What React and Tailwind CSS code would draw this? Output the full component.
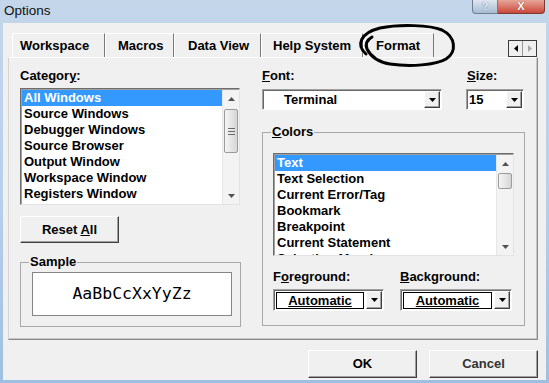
import React from 'react';

const sans = "font-['Liberation_Sans',Arial,sans-serif]";

function Down({ color = '#000' }) {
  return (
    <svg width="7" height="4" viewBox="0 0 7 4">
      <path d="M0 0h7L3.5 4z" fill={color} />
    </svg>
  );
}

function Up({ color = '#000' }) {
  return (
    <svg width="7" height="4" viewBox="0 0 7 4">
      <path d="M0 4h7L3.5 0z" fill={color} />
    </svg>
  );
}

function Raised({ className = '', children }) {
  return (
    <div className={`bg-[#f0f0f0] border border-t-white border-l-white border-r-[#404040] border-b-[#404040] shadow-[inset_-1px_-1px_0_#a0a0a0] flex items-center justify-center ${className}`}>
      {children}
    </div>
  );
}

function ScrollBar({ thumbTop, thumbHeight, grip }) {
  return (
    <div className="w-[17px] h-full bg-[#f3f3f3] border-l border-[#e6e6e6] flex flex-col">
      <div className="h-[17px] flex items-center justify-center">
        <Up color="#505050" />
      </div>
      <div className="flex-1 relative">
        <div
          className="absolute left-[1px] right-[1px] rounded-[2px] border border-[#9b9b9b] bg-gradient-to-r from-[#f5f5f5] to-[#d6d6d6] flex flex-col items-center justify-center gap-[2px]"
          style={{ top: thumbTop, height: thumbHeight }}
        >
          {grip && (
            <>
              <div className="w-[7px] h-[1px] bg-[#6a6a6a]" />
              <div className="w-[7px] h-[1px] bg-[#6a6a6a]" />
              <div className="w-[7px] h-[1px] bg-[#6a6a6a]" />
            </>
          )}
        </div>
      </div>
      <div className="h-[17px] flex items-center justify-center">
        <Down color="#505050" />
      </div>
    </div>
  );
}

function ListBox({ items, className, thumbTop, thumbHeight, grip }) {
  return (
    <div className={`bg-white border border-t-[#6d6d6d] border-l-[#6d6d6d] border-r-[#e3e3e3] border-b-[#e3e3e3] shadow-[inset_1px_1px_0_#a0a0a0] flex overflow-hidden ${className}`}>
      <div className="flex-1 pt-[1px] pl-[1px]">
        {items.map((it, i) => (
          <div
            key={it}
            className={`h-[16px] leading-[16px] pl-[2px] whitespace-nowrap text-[13px] font-bold ${i === 0 ? 'bg-[#3399ff] text-white' : 'text-black'}`}
          >
            {it}
          </div>
        ))}
      </div>
      <div className="pt-[1px] h-full">
        <ScrollBar thumbTop={thumbTop} thumbHeight={thumbHeight} grip={grip} />
      </div>
    </div>
  );
}

function Combo({ className, children }) {
  return (
    <div className={`h-[21px] bg-white border border-t-[#a0a0a0] border-l-[#a0a0a0] border-r-white border-b-white shadow-[inset_1px_1px_0_#696969] flex items-center pr-[1px] ${className}`}>
      <div className="flex-1 text-[13px] font-bold leading-[16px]">{children}</div>
      <Raised className="w-[16px] h-[17px]">
        <Down />
      </Raised>
    </div>
  );
}

function ColorCombo({ className }) {
  return (
    <div className={`h-[22px] bg-white border border-t-[#a0a0a0] border-l-[#a0a0a0] border-r-white border-b-white shadow-[inset_1px_1px_0_#696969] flex items-center pl-[2px] pr-[1px] gap-[2px] ${className}`}>
      <div className="flex-1 h-[17px] border border-black flex items-center justify-center text-[13px] font-bold underline leading-[15px]">
        Automatic
      </div>
      <Raised className="w-[16px] h-[18px]">
        <Down />
      </Raised>
    </div>
  );
}

export default function App() {
  const tabs = [
    { label: 'Workspace', w: 'w-[93px] pl-[7px]' },
    { label: 'Macros', w: 'w-[69px] pl-[12px]' },
    { label: 'Data View', w: 'w-[87px] pl-[13px]' },
    { label: 'Help System', w: 'w-[102px] pl-[11px]' },
    { label: 'Format', w: 'w-[71px] pl-[12px]' },
  ];

  const categories = [
    'All Windows',
    'Source Windows',
    'Debugger Windows',
    'Source Browser',
    'Output Window',
    'Workspace Window',
    'Registers Window',
  ];

  const colors = [
    'Text',
    'Text Selection',
    'Current Error/Tag',
    'Bookmark',
    'Breakpoint',
    'Current Statement',
    'Selection Margin',
  ];

  return (
    <div className={`relative w-[549px] h-[383px] overflow-hidden bg-gradient-to-b from-[#c3d6ea] via-[#b8d0ea] to-[#9fbfe2] ${sans}`}>
      {/* title bar */}
      <div className="h-[23px] flex items-start justify-between pl-[4px] pr-[4px]">
        <span className="text-[13.5px] leading-[18px] mt-[2px] text-[#111]">Options</span>
        <div className="flex h-[14px]">
          <div className="w-[26px] h-full rounded-bl-[4px] border border-t-0 border-[#6e7f95] bg-gradient-to-b from-[#dfe7f1] to-[#a9bbd1] flex items-center justify-center text-[11px] font-bold leading-none text-[#f4f7fb] [text-shadow:0_0_1px_#33475e]">
            ?
          </div>
          <div className="w-[47px] h-full rounded-br-[4px] border border-t-0 border-l-0 border-[#7a3a32] bg-gradient-to-b from-[#e6a597] to-[#c8453a] flex items-center justify-center text-[11px] font-bold leading-none text-white [text-shadow:0_0_1px_#5a1a14]">
            X
          </div>
        </div>
      </div>

      {/* client area */}
      <div className="mx-[3px] h-[357px] bg-[#f0f0f0] flex flex-col">
        {/* tab strip */}
        <div className="mt-[10px] ml-[5px] w-[530px] h-[24px] flex">
          <div className="ml-[4px] flex h-full">
            {tabs.map((t) => (
              <div
                key={t.label}
                className={`h-full flex items-center border-t border-l border-t-white border-l-white border-r border-r-[#7a7a7a] text-[13px] font-bold text-black ${t.w}`}
              >
                {t.label}
              </div>
            ))}
          </div>
          <div className="ml-auto self-end mr-[1px] h-[17px] w-[29px] flex border border-[#3c3c3c] bg-[#f0f0f0]">
            <div className="flex-1 flex items-center justify-center border-r border-[#9a9a9a]">
              <svg width="4" height="7" viewBox="0 0 4 7">
                <path d="M4 0v7L0 3.5z" fill="#000" />
              </svg>
            </div>
            <div className="flex-1 flex items-center justify-center">
              <svg width="4" height="7" viewBox="0 0 4 7">
                <path d="M0 0v7L4 3.5z" fill="#a8a8a8" />
              </svg>
            </div>
          </div>
        </div>

        {/* tab panel */}
        <div className="ml-[5px] w-[530px] h-[283px] border border-t-white border-l-[#d4d4d4] border-r-[#8a8a8a] border-b-[#8a8a8a] shadow-[inset_-1px_-1px_0_#c8c8c8] flex pl-[11px] pt-[10px]">
          {/* left column */}
          <div className="w-[221px] flex flex-col">
            <div className="h-[16px] leading-[16px] text-[13px] font-bold">
              Categor<u>y</u>:
            </div>
            <ListBox
              items={categories}
              className="mt-[4px] w-[220px] h-[117px]"
              thumbTop={2}
              thumbHeight={44}
              grip
            />
            <Raised className="mt-[11px] w-[99px] h-[27px] text-[13px] font-bold">
              <span>
                Reset <u>A</u>ll
              </span>
            </Raised>
            <fieldset className="mt-[11px] w-[221px] border border-[#a8a8a8] pb-[10px]">
              <legend className="ml-[8px] px-[1px] text-[13px] font-bold leading-[16px]">Sample</legend>
              <div className="mt-[2px] ml-[11px] w-[200px] h-[44px] bg-white border border-[#858585] flex items-center justify-center font-['DejaVu_Sans_Mono',monospace] text-[16.5px] leading-none text-black">
                AaBbCcXxYyZz
              </div>
            </fieldset>
          </div>

          {/* right column */}
          <div className="ml-[21px] w-[263px] flex flex-col">
            <div className="h-[16px] flex text-[13px] font-bold leading-[16px]">
              <div className="w-[205px]">
                <u>F</u>ont:
              </div>
              <div>
                <u>S</u>ize:
              </div>
            </div>
            <div className="mt-[5px] flex">
              <Combo className="w-[180px]">
                <span className="pl-[21px]">Terminal</span>
              </Combo>
              <Combo className="ml-[24px] w-[58px]">
                <span className="pl-[2px]">15</span>
              </Combo>
            </div>
            <fieldset className="mt-[14px] w-[263px] border border-[#a8a8a8] pb-[14px]">
              <legend className="ml-[8px] px-[1px] text-[13px] font-bold leading-[16px]">
                <u>C</u>olors
              </legend>
              <ListBox
                items={colors}
                className="mt-[13px] ml-[10px] w-[241px] h-[103px]"
                thumbTop={1}
                thumbHeight={16}
              />
              <div className="mt-[13px] ml-[10px] flex text-[13px] font-bold leading-[16px]">
                <div className="w-[127px]">
                  F<u>o</u>reground:
                </div>
                <div>
                  <u>B</u>ackground:
                </div>
              </div>
              <div className="mt-[4px] ml-[10px] flex">
                <ColorCombo className="w-[111px]" />
                <ColorCombo className="ml-[16px] w-[112px]" />
              </div>
            </fieldset>
          </div>
        </div>

        {/* buttons */}
        <div className="mt-[10px] mr-[8px] flex justify-end gap-[12px]">
          <Raised className="w-[109px] h-[28px] text-[13px] font-bold">OK</Raised>
          <Raised className="w-[109px] h-[28px] text-[13px] font-bold text-[#333]">Cancel</Raised>
        </div>
      </div>

      {/* hand-drawn circle around the Format tab */}
      <svg className="absolute left-0 top-0 pointer-events-none" width="549" height="383" viewBox="0 0 549 383">
        <path
          d="M366 54 C356 45 360 33 380 28 C400 24 430 25 442 30 C456 37 457 52 446 59 C436 65 410 67 390 64 C378 62 371 57 367 49 C365 44 367 40 372 37"
          fill="none"
          stroke="#000"
          strokeWidth="3"
          strokeLinecap="round"
        />
      </svg>
    </div>
  );
}
